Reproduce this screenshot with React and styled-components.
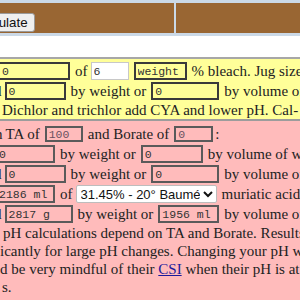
import React from "react";
import styled, { createGlobalStyle } from "styled-components";

const Global = createGlobalStyle`
  html, body { margin: 0; padding: 0; width: 300px; height: 300px; overflow: hidden; }
  body { background: #cbd9e7; font-family: "Liberation Serif", "Times New Roman", serif; color: #222; }
`;

const Page = styled.div`
  display: flex;
  flex-direction: column;
  padding-top: 3px;
  width: 300px;
  height: 300px;
  overflow: hidden;
  background: #cbd9e7;
`;

const TopBar = styled.div`
  display: grid;
  grid-template-columns: 174px 1fr;
  column-gap: 2px;
  height: 30px;
`;

const BrownCell = styled.div`
  background: #996633;
  display: flex;
  align-items: flex-end;
  padding-bottom: 1px;
  overflow: hidden;
`;

const CalcButton = styled.button`
  font-family: "Liberation Sans", Arial, sans-serif;
  font-size: 13.33px;
  margin: 0 0 0 -35px;
  padding: 1px 6px;
  height: 19px;
  background: #efefef;
  color: #111;
  border: 1px solid #9a9a9a;
  border-radius: 3px;
`;

const WhiteRow = styled.div`
  margin-top: 3px;
  height: 21px;
  background: #fff;
  border-bottom: 2px solid #a7a7a7;
`;

const Section = styled.div`
  background: ${(p) => p.$bg};
  padding-top: ${(p) => p.$pt}px;
  border-bottom: 2px solid #9c9c9c;
  ${(p) => (p.$grow ? "flex: 1;" : "")}
  overflow: hidden;
`;

const Row = styled.div`
  display: flex;
  align-items: center;
  gap: 5px;
  height: ${(p) => p.$h || 20}px;
  white-space: nowrap;
  font-size: 15px;
`;

const TextLine = styled.div`
  height: 18px;
  line-height: 18px;
  font-size: 15px;
  white-space: nowrap;
  padding-left: ${(p) => p.$pl || 0}px;
`;

const Cut = styled.span`
  margin-left: ${(p) => p.$ml}px;
  margin-right: ${(p) => p.$mr || 0}px;
`;

const Field = styled.input`
  box-sizing: border-box;
  width: ${(p) => p.$w}px;
  height: ${(p) => p.$h || 18}px;
  margin: 0 ${(p) => p.$mr || 0}px 0 ${(p) => p.$ml || 0}px;
  padding: 0 2px;
  font-family: "Liberation Mono", "Courier New", monospace;
  font-size: 11.5px;
  color: ${(p) => p.$fg || "#333"};
  background: ${(p) => p.$bg};
  border: ${(p) => p.$border};
  flex: none;
`;

const Select = styled.select`
  box-sizing: border-box;
  width: 141px;
  height: 18px;
  margin-left: -2px;
  font-family: "Liberation Sans", Arial, sans-serif;
  font-size: 13px;
  color: #111;
  background: #fff;
  border: 1px solid #bdbdbd;
  border-radius: 2px;
  padding: 0;
  flex: none;
`;

const Link = styled.a`
  color: #1a1a9c;
  text-decoration: underline;
`;

const YELLOW = "#ffff99";
const PINK = "#ffbbbb";
const darkBorder = "2px solid #3a3a3a";
const pinkBorder = "2px solid #5a5a5a";

export default function App() {
  return (
    <>
      <Global />
      <Page>
        <TopBar>
          <BrownCell>
            <CalcButton>Calculate</CalcButton>
          </BrownCell>
          <BrownCell />
        </TopBar>
        <WhiteRow />
        <Section $bg={YELLOW} $pt={2}>
          <Row>
            <Field $w={72} $ml={-2} $bg={YELLOW} $border={darkBorder} defaultValue="0" />
            <span>of</span>
            <Field $w={38} $ml={-2} $bg="#fff" $border="1px solid #c8c8c8" defaultValue="6" />
            <Field $w={53} $bg={YELLOW} $border={darkBorder} defaultValue="weight" />
            <span>% bleach. Jug size</span>
          </Row>
          <Row>
            <Cut $ml={-6} $mr={-2}>d</Cut>
            <Field $w={61} $bg={YELLOW} $border={darkBorder} defaultValue="0" />
            <span>by weight or</span>
            <Field $w={68} $bg={YELLOW} $border={darkBorder} defaultValue="0" />
            <span>by volume of water</span>
          </Row>
          <TextLine $pl={2}> Dichlor and trichlor add CYA and lower pH. Cal-</TextLine>
        </Section>
        <Section $bg={PINK} $pt={3} $grow>
          <Row>
            <Cut $ml={-5} $mr={-2}>n</Cut>
            <span>TA of</span>
            <Field $w={38} $h={16} $bg={PINK} $border={pinkBorder} $fg="#6a5060" defaultValue="100" />
            <span>and Borate of</span>
            <Field $w={39} $h={16} $bg={PINK} $border={pinkBorder} $fg="#6a5060" defaultValue="0" />
            <Cut $ml={-3}>:</Cut>
          </Row>
          <Row>
            <Field $w={60} $ml={-5} $bg={PINK} $border={pinkBorder} defaultValue="0" />
            <span>by weight or</span>
            <Field $w={62} $bg={PINK} $border={pinkBorder} defaultValue="0" />
            <span>by volume of water</span>
          </Row>
          <Row>
            <Cut $ml={-6} $mr={-2}>d</Cut>
            <Field $w={61} $bg={PINK} $border={pinkBorder} defaultValue="0" />
            <span>by weight or</span>
            <Field $w={68} $bg={PINK} $border={pinkBorder} defaultValue="0" />
            <span>by volume of water</span>
          </Row>
          <Row>
            <Field $w={60} $ml={-5} $bg={PINK} $border={pinkBorder} defaultValue="2186 ml" />
            <span>of</span>
            <Select defaultValue="a">
              <option value="a">31.45% - 20° Baumé</option>
            </Select>
            <span>muriatic acid</span>
          </Row>
          <Row>
            <Cut $ml={-6} $mr={-2}>d</Cut>
            <Field $w={68} $bg={PINK} $border={pinkBorder} defaultValue="2817 g" />
            <span>by weight or</span>
            <Field $w={61} $bg={PINK} $border={pinkBorder} defaultValue="1956 ml" />
            <span>by volume of water</span>
          </Row>
          <TextLine $pl={3}> pH calculations depend on TA and Borate. Results</TextLine>
          <TextLine>icantly for large pH changes. Changing your pH will</TextLine>
          <TextLine>d be very mindful of their <Link href="#">CSI</Link> when their pH is at</TextLine>
          <TextLine $pl={2}>s.</TextLine>
        </Section>
      </Page>
    </>
  );
}
